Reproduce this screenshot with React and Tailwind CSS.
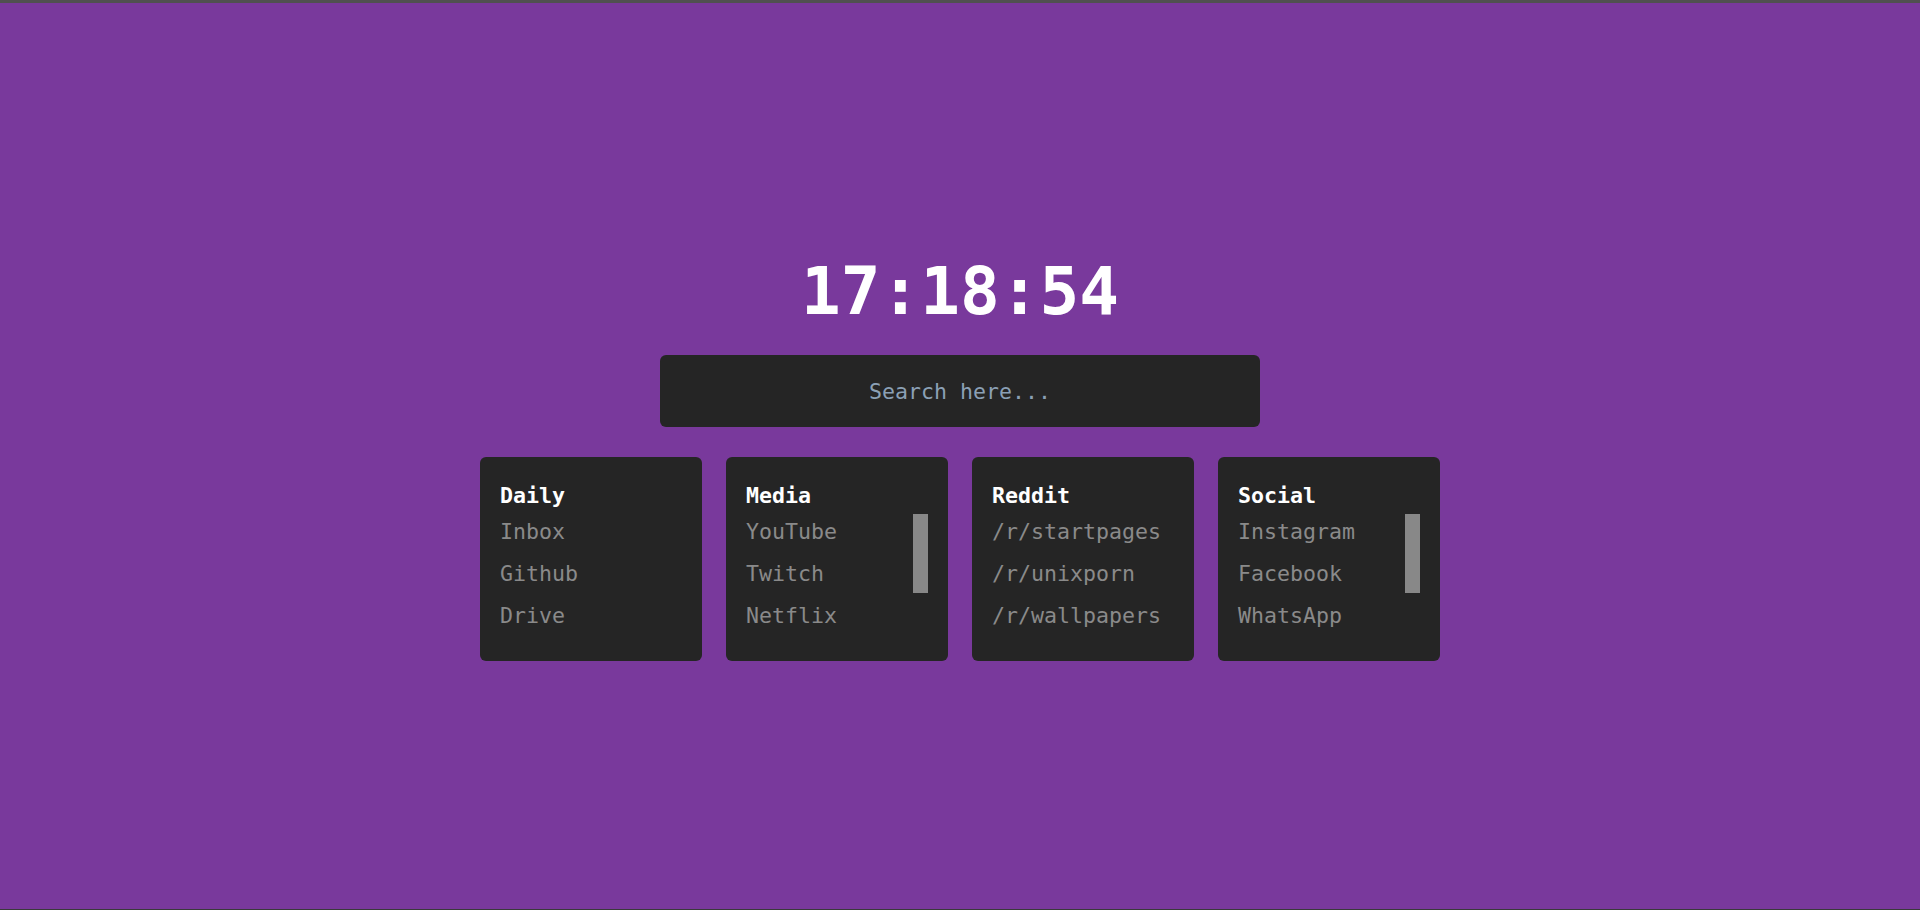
import { useEffect, useState } from "react";

const groups = [
  { title: "Daily", links: ["Inbox", "Github", "Drive"] },
  { title: "Media", links: ["YouTube", "Twitch", "Netflix"], scroll: true },
  { title: "Reddit", links: ["/r/startpages", "/r/unixporn", "/r/wallpapers"] },
  { title: "Social", links: ["Instagram", "Facebook", "WhatsApp"], scroll: true },
];

const LinkCard = ({ title, links, scroll }) => (
  <div className="w-[222px] rounded-md bg-[#252525] px-5 pt-[21px] pb-[19px]">
    <h3 className="text-[21.6px] leading-[36px] font-bold text-white">{title}</h3>
    <div className="flex h-[128px]">
      <ul className="flex flex-1 flex-col gap-1.5">
        {links.map((link) => (
          <li key={link}>
            <a href="#" className="block text-[21.6px] leading-[36px] whitespace-nowrap text-[#8a8a8a]">
              {link}
            </a>
          </li>
        ))}
      </ul>
      {/* scrollbar thumb of the longer lists */}
      {scroll && <div className="h-[79px] w-[15px] shrink-0 bg-[#888]" />}
    </div>
  </div>
);

const App = () => {
  // fixed time so the page matches the screenshot
  const [time] = useState("17:18:54");
  const [query, setQuery] = useState("");

  useEffect(() => {
    document.title = "Startpage";
  }, []);

  return (
    <div
      className="flex h-screen flex-col items-center justify-center border-t-[3px] border-b border-t-[#505050] border-b-[#3a3a3a] bg-[#79399c] pt-2"
      style={{ fontFamily: '"DejaVu Sans Mono", "Liberation Mono", monospace' }}
    >
      <h1 className="text-[66px] leading-none font-bold text-white">{time}</h1>

      <input
        type="text"
        value={query}
        onChange={(e) => setQuery(e.target.value)}
        placeholder="Search here..."
        className="mt-[30px] h-[72px] w-[600px] rounded-md bg-[#252525] text-center text-[21.6px] text-[#c8c8c8] outline-none placeholder:text-[#8ba0b5]"
      />

      {/* link groups */}
      <div className="mt-[30px] flex gap-6">
        {groups.map((g) => (
          <LinkCard key={g.title} {...g} />
        ))}
      </div>
    </div>
  );
};

export default App;
